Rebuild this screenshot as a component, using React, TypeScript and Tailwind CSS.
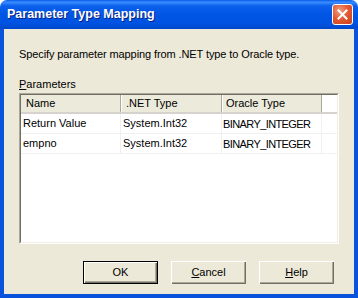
import React from 'react';

const rows = [
  { name: 'Return Value', net: 'System.Int32', ora: 'BINARY_INTEGER' },
  { name: 'empno', net: 'System.Int32', ora: 'BINARY_INTEGER' },
];

const XpButton: React.FC<{ children: React.ReactNode; isDefault?: boolean }> = ({ children, isDefault }) => (
  <button
    className={
      'w-[75px] h-[23px] bg-[#ECE9D8] text-[11px] text-black ' +
      (isDefault
        ? 'border border-black shadow-[inset_1px_1px_0_#fff,inset_-1px_-1px_0_#716F64,inset_-2px_-2px_0_#ACA899]'
        : 'shadow-[inset_1px_1px_0_#fff,inset_-1px_-1px_0_#716F64,inset_-2px_-2px_0_#ACA899]')
    }
  >
    {children}
  </button>
);

export default function App() {
  return (
    <div className="w-[358px] h-[298px] flex flex-col font-['Liberation_Sans',Arial,sans-serif] text-[11px] text-black select-none">
      {/* Title bar */}
      <div className="h-[29px] shrink-0 rounded-t-[7px] bg-[linear-gradient(180deg,#0A5EEA_0%,#3A8CFF_8%,#0C60EC_20%,#0055E5_50%,#0053E1_80%,#0047CC_100%)] flex items-center pl-[7px] pr-[5px]">
        <span className="flex-1 text-white font-bold text-[12.5px] [text-shadow:1px_1px_0_#0A1F80]">
          Parameter Type Mapping
        </span>
        <button className="w-[21px] h-[21px] rounded-[3px] border border-white bg-[radial-gradient(circle_at_35%_30%,#F0A080_0%,#E35A34_45%,#C8401C_100%)] flex items-center justify-center">
          <svg width="11" height="11" viewBox="0 0 11 11">
            <path d="M1.5 1.5 L9.5 9.5 M9.5 1.5 L1.5 9.5" stroke="white" strokeWidth="2" strokeLinecap="square" />
          </svg>
        </button>
      </div>

      {/* Body */}
      <div className="flex-1 flex flex-col bg-[#ECE9D8] border-x-4 border-b-4 border-[#0852DC] pl-[15px] pr-[11px]">
        <p className="mt-[19px] leading-[13px] tracking-[-0.1px]">Specify parameter mapping from .NET type to Oracle type.</p>
        <p className="mt-[17px] leading-[13px]">
          <span className="underline">P</span>arameters
        </p>

        {/* List view */}
        <div className="mt-[2px] h-[151px] w-[320px] bg-white border border-t-[#ACA899] border-l-[#ACA899] border-r-white border-b-white">
          <div className="h-full border border-t-[#716F64] border-l-[#716F64] border-r-[#F1EFE2] border-b-[#F1EFE2] overflow-hidden">
            <div className="flex h-[19px] bg-[#EBEADB] border-b-2 border-[#D6D3CE]">
              <div className="w-[100px] pl-[5px] flex items-center border-r border-[#ACA899] shadow-[1px_0_0_#fff]">Name</div>
              <div className="w-[101px] pl-[5px] flex items-center border-r border-[#ACA899] shadow-[1px_0_0_#fff]">.NET Type</div>
              <div className="w-[100px] pl-[4px] flex items-center border-r border-[#ACA899] shadow-[1px_0_0_#fff]">Oracle Type</div>
              <div className="flex-1 bg-white" />
            </div>
            {rows.map((r) => (
              <div key={r.name} className="flex h-[20px] border-b border-[#F0F0F0]">
                <div className="w-[100px] pl-[2px] flex items-center border-r border-[#F0F0F0]">{r.name}</div>
                <div className="w-[101px] pl-[2px] flex items-center border-r border-[#F0F0F0]">{r.net}</div>
                <div className="w-[100px] pl-[1px] flex items-start pt-[2px] border-r border-[#F0F0F0] tracking-[-0.6px] whitespace-nowrap overflow-hidden">
                  {r.ora}
                </div>
              </div>
            ))}
          </div>
        </div>

        <div className="mt-[17px] flex justify-end gap-[13px] pr-[9px]">
          <XpButton isDefault>OK</XpButton>
          <XpButton>
            <span className="underline">C</span>ancel
          </XpButton>
          <XpButton>
            <span className="underline">H</span>elp
          </XpButton>
        </div>
      </div>
    </div>
  );
}
